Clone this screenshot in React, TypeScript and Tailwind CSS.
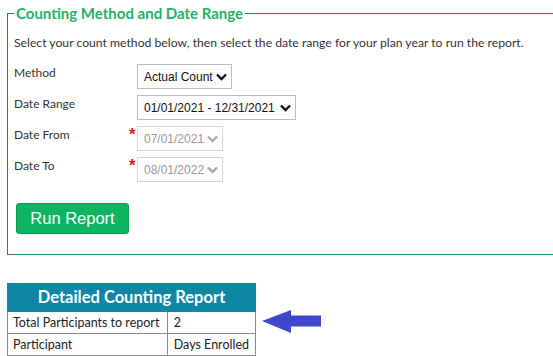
import React from "react";

function Chevron({ color }: { color: string }) {
  return (
    <svg width="11" height="8" viewBox="0 0 11 8" className="shrink-0">
      <path d="M1 1.5 L5.5 6 L10 1.5" fill="none" stroke={color} strokeWidth="2.3" />
    </svg>
  );
}

function FakeSelect({
  value,
  width,
  disabled,
}: {
  value: string;
  width: string;
  disabled?: boolean;
}) {
  return (
    <div
      className={`${width} h-[25px] flex items-center justify-between pl-[6px] pr-[4px] border bg-white ${
        disabled ? "border-[#d6d6d6] text-[#9a9a9a]" : "border-[#bdbdbd] text-[#111]"
      } text-[12px] leading-none`}
      style={{ fontFamily: '"Liberation Sans", Arial, sans-serif' }}
    >
      <span className="whitespace-nowrap">{value}</span>
      <Chevron color={disabled ? "#a8a8a8" : "#111"} />
    </div>
  );
}

function Row({
  label,
  required,
  children,
}: {
  label: string;
  required?: boolean;
  children: React.ReactNode;
}) {
  return (
    <div className="flex items-start h-[25px]">
      <div className="w-[116px] text-[12px] text-[#333] leading-[16px] pt-[1px]">{label}</div>
      <div className="w-[7px] relative h-full">
        {required && (
          <span
            className="absolute left-[-1px] top-[0px] text-[#ee1111] text-[17px] font-bold leading-none"
            style={{ fontFamily: '"Liberation Sans", Arial, sans-serif' }}
          >
            *
          </span>
        )}
      </div>
      {children}
    </div>
  );
}

export default function App() {
  return (
    <div
      className="w-[553px] h-[356px] overflow-hidden bg-white"
      style={{ fontFamily: 'Lato, "Open Sans", sans-serif' }}
    >
      <fieldset className="ml-[7px] mt-[2px] w-[580px] border border-[#15904f] pl-[6px] pb-[20px]">
        <legend className="ml-0 px-[2px] text-[15px] leading-[22px] font-bold text-[#20b466]">
          Counting Method and Date Range
        </legend>
        <p className="mt-[11px] text-[12.2px] leading-[16px] text-[#333]">
          Select your count method below, then select the date range for your plan year to run the report.
        </p>
        <div className="mt-[13px] flex flex-col gap-[6px]">
          <Row label="Method">
            <FakeSelect value="Actual Count" width="w-[95px]" />
          </Row>
          <Row label="Date Range">
            <FakeSelect value="01/01/2021 - 12/31/2021" width="w-[159px]" />
          </Row>
          <Row label="Date From" required>
            <FakeSelect value="07/01/2021" width="w-[86px]" disabled />
          </Row>
          <Row label="Date To" required>
            <FakeSelect value="08/01/2022" width="w-[86px]" disabled />
          </Row>
        </div>
        <button
          className="mt-[21px] ml-[2px] w-[113px] h-[31px] rounded-[3px] bg-[#0db562] border border-[#0a9c52] text-white text-[16.5px] flex items-center justify-center"
          style={{ fontFamily: '"Liberation Sans", Arial, sans-serif' }}
        >
          Run Report
        </button>
      </fieldset>

      <div className="mt-[28px] ml-[7px] flex items-start">
        <table className="w-[249px] border-collapse text-[12.5px] text-[#222]">
          <thead>
            <tr>
              <th
                colSpan={2}
                className="h-[28px] bg-[#0f87a4] text-white text-[16.5px] font-bold text-center border border-[#0f87a4] p-0"
              >
                Detailed Counting Report
              </th>
            </tr>
          </thead>
          <tbody>
            <tr>
              <td className="h-[22px] w-[160px] border border-[#8a8a8a] px-[5px] py-0 leading-[20px] whitespace-nowrap">
                Total Participants to report
              </td>
              <td className="h-[22px] border border-[#8a8a8a] px-[6px] py-0 leading-[20px]">2</td>
            </tr>
            <tr>
              <td className="h-[22px] border border-[#8a8a8a] px-[5px] py-0 leading-[20px]">Participant</td>
              <td className="h-[22px] border border-[#8a8a8a] px-[6px] py-0 leading-[20px] whitespace-nowrap">
                Days Enrolled
              </td>
            </tr>
          </tbody>
        </table>
        <svg width="60" height="24" viewBox="0 0 60 24" className="ml-[6px] mt-[27px]">
          <polygon points="0,11 29,0 29,5.5 59,5.5 59,16.5 29,16.5 29,23" fill="#3f48cc" />
        </svg>
      </div>
    </div>
  );
}
